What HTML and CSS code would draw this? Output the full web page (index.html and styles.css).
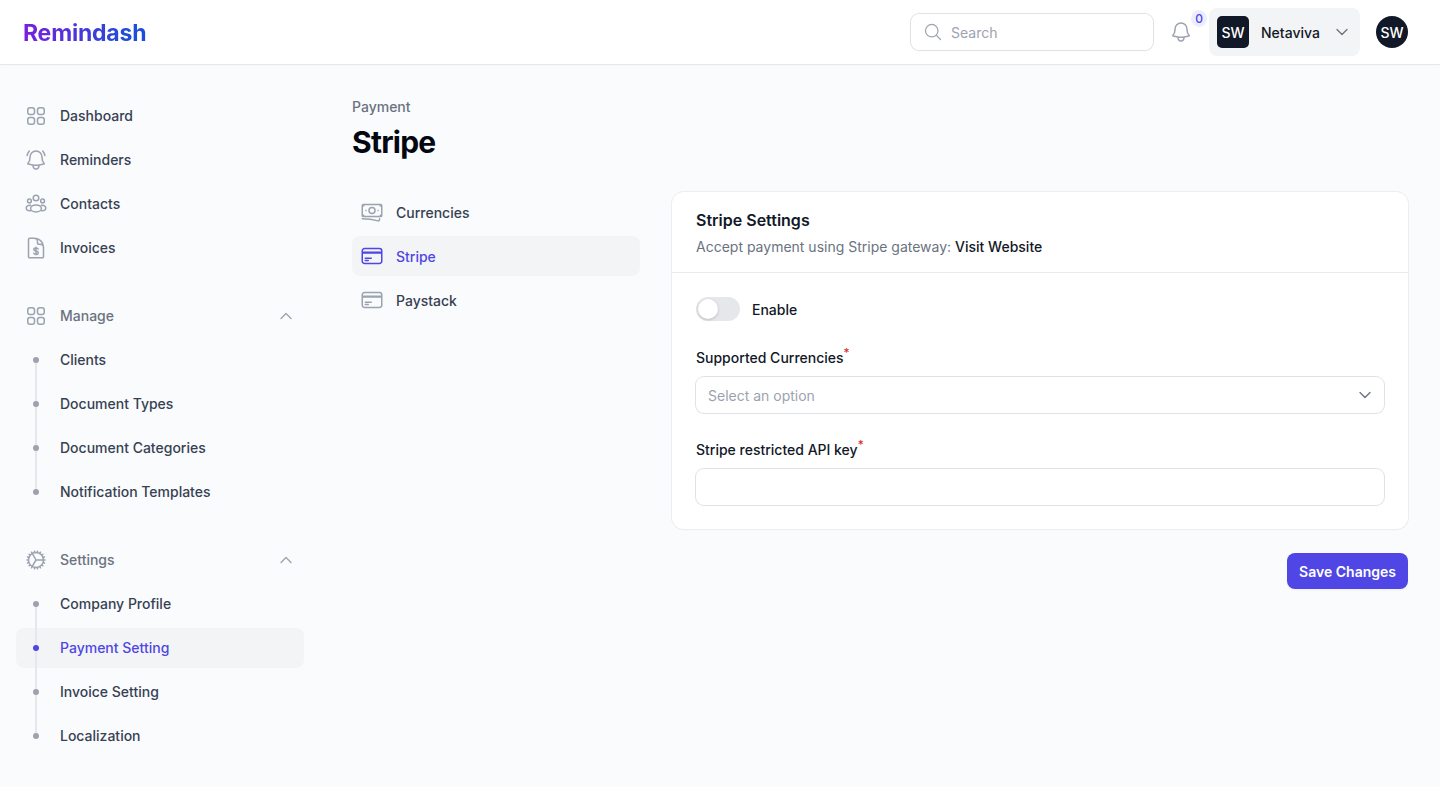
FILE: index.html
```html
<!DOCTYPE html>
<html lang="en">
<head>
    <meta charset="UTF-8">
    <meta name="viewport" content="width=device-width, initial-scale=1.0">
    <title>Stripe - Remindash</title>
    <link rel="stylesheet" href="styles.css">
</head>
<body>

<svg class="icon-defs" aria-hidden="true">
    <symbol id="i-grid" viewBox="0 0 24 24"><path d="M3.75 6A2.25 2.25 0 016 3.75h2.25A2.25 2.25 0 0110.5 6v2.25a2.25 2.25 0 01-2.25 2.25H6a2.25 2.25 0 01-2.25-2.25V6zM3.75 15.75A2.25 2.25 0 016 13.5h2.25a2.25 2.25 0 012.25 2.25V18a2.25 2.25 0 01-2.25 2.25H6A2.25 2.25 0 013.75 18v-2.25zM13.5 6a2.25 2.25 0 012.25-2.25H18A2.25 2.25 0 0120.25 6v2.25A2.25 2.25 0 0118 10.5h-2.25a2.25 2.25 0 01-2.25-2.25V6zM13.5 15.75a2.25 2.25 0 012.25-2.25H18a2.25 2.25 0 012.25 2.25V18A2.25 2.25 0 0118 20.25h-2.25A2.25 2.25 0 0113.5 18v-2.25z"/></symbol>
    <symbol id="i-bell-alert" viewBox="0 0 24 24"><path d="M14.857 17.082a23.848 23.848 0 005.454-1.31A8.967 8.967 0 0118 9.75v-.7V9A6 6 0 006 9v.75a8.967 8.967 0 01-2.312 6.022c1.733.64 3.56 1.085 5.455 1.31m5.714 0a24.255 24.255 0 01-5.714 0m5.714 0a3 3 0 11-5.714 0M3.124 7.5A8.969 8.969 0 015.292 3m13.416 0a8.969 8.969 0 012.168 4.5"/></symbol>
    <symbol id="i-bell" viewBox="0 0 24 24"><path d="M14.857 17.082a23.848 23.848 0 005.454-1.31A8.967 8.967 0 0118 9.75v-.7V9A6 6 0 006 9v.75a8.967 8.967 0 01-2.312 6.022c1.733.64 3.56 1.085 5.455 1.31m5.714 0a24.255 24.255 0 01-5.714 0m5.714 0a3 3 0 11-5.714 0"/></symbol>
    <symbol id="i-people" viewBox="0 0 24 24"><circle cx="12" cy="6" r="2.8"/><circle cx="5.4" cy="9" r="1.9"/><circle cx="18.6" cy="9" r="1.9"/><ellipse cx="12" cy="16.4" rx="5.4" ry="3.5"/><path d="M6.6 13.2C4 13.2 2.2 14.4 2.2 16s1.8 2.8 4.4 2.8M17.4 13.2c2.6 0 4.4 1.2 4.4 2.8s-1.8 2.8-4.4 2.8"/></symbol>
    <symbol id="i-invoice" viewBox="0 0 24 24"><path d="M10.5 2.25H5.625c-.621 0-1.125.504-1.125 1.125v17.25c0 .621.504 1.125 1.125 1.125h12.75c.621 0 1.125-.504 1.125-1.125V11.25a9 9 0 00-9-9zM19.5 14.25v-2.625a3.375 3.375 0 00-3.375-3.375h-1.5A1.125 1.125 0 0113.5 7.125v-1.5a3.375 3.375 0 00-3.375-3.375H8.25"/><path d="M12 11.2v7.6M14.2 13c-.3-.7-1.1-1.1-2.2-1.1s-2.2.5-2.2 1.6 1.1 1.4 2.2 1.6 2.2.6 2.2 1.6-1.1 1.6-2.2 1.6-1.9-.4-2.2-1.1"/></symbol>
    <symbol id="i-cog" viewBox="0 0 24 24"><path d="M4.5 12a7.5 7.5 0 0015 0m-15 0a7.5 7.5 0 1115 0m-15 0H3m16.5 0H21m-1.5 0H12m-8.457 3.077l1.41-.513m14.095-5.13l1.41-.513M5.106 17.785l1.15-.964m11.49-9.642l1.149-.964M7.501 19.795l.75-1.3m7.5-12.99l.75-1.3m-6.063 16.658l.26-1.477m2.605-14.772l.26-1.477m0 17.726l-.26-1.477M10.698 4.614l-.26-1.477M16.5 19.794l-.75-1.299M7.5 4.205L12 12m6.894 5.785l-1.149-.964M6.256 7.178l-1.15-.964m15.352 8.864l-1.41-.513M4.954 9.435l-1.41-.514M12.002 12l-3.75 6.495"/></symbol>
    <symbol id="i-chevron-up" viewBox="0 0 24 24"><path d="M4.5 15.75l7.5-7.5 7.5 7.5"/></symbol>
    <symbol id="i-chevron-down" viewBox="0 0 24 24"><path d="M19.5 8.25l-7.5 7.5-7.5-7.5"/></symbol>
    <symbol id="i-search" viewBox="0 0 24 24"><path d="M21 21l-5.197-5.197m0 0A7.5 7.5 0 105.196 5.196a7.5 7.5 0 0010.607 10.607z"/></symbol>
    <symbol id="i-banknotes" viewBox="0 0 24 24"><path d="M2.25 18.75a60.07 60.07 0 0115.797 2.101c.727.198 1.453-.342 1.453-1.096V18.75M3.75 4.5v.75A.75.75 0 013 6h-.75m0 0v-.375c0-.621.504-1.125 1.125-1.125H20.25M2.25 6v9m18-10.5v.75c0 .414.336.75.75.75h.75m-1.5-1.5h.375c.621 0 1.125.504 1.125 1.125v9.75c0 .621-.504 1.125-1.125 1.125h-.375m1.5-1.5H21a.75.75 0 00-.75.75v.75m0 0H3.75m0 0h-.375a1.125 1.125 0 01-1.125-1.125V15m1.5 1.5v-.75A.75.75 0 003 15h-.75M15 10.5a3 3 0 11-6 0 3 3 0 016 0zm3 0h.008v.008H18V10.5zm-12 0h.008v.008H6V10.5z"/></symbol>
    <symbol id="i-card" viewBox="0 0 24 24"><path d="M2.25 8.25h19.5M2.25 9h19.5m-16.5 5.25h6m-6 2.25h3m-3.75 3h15a2.25 2.25 0 002.25-2.25V6.75A2.25 2.25 0 0019.5 4.5h-15a2.25 2.25 0 00-2.25 2.25v10.5A2.25 2.25 0 004.5 19.5z"/></symbol>
</svg>

<header class="topbar">
    <a class="logo" href="#">Remindash</a>
    <div class="topbar-right">
        <label class="search">
            <svg class="icon icon-search"><use href="#i-search"/></svg>
            <input type="text" placeholder="Search">
        </label>
        <button class="bell" type="button">
            <svg class="icon"><use href="#i-bell"/></svg>
            <span class="bell-badge">0</span>
        </button>
        <button class="tenant" type="button">
            <span class="tenant-logo">SW</span>
            <span class="tenant-name">Netaviva</span>
            <svg class="icon icon-sm icon-dark"><use href="#i-chevron-down"/></svg>
        </button>
        <span class="avatar">SW</span>
    </div>
</header>

<div class="layout">
    <!-- Sidebar -->
    <nav class="sidebar">
        <div class="nav-group">
            <a class="nav-item" href="#"><svg class="icon"><use href="#i-grid"/></svg>Dashboard</a>
            <a class="nav-item" href="#"><svg class="icon"><use href="#i-bell-alert"/></svg>Reminders</a>
            <a class="nav-item" href="#"><svg class="icon"><use href="#i-people"/></svg>Contacts</a>
            <a class="nav-item" href="#"><svg class="icon"><use href="#i-invoice"/></svg>Invoices</a>
        </div>

        <div class="nav-group">
            <div class="nav-item nav-heading">
                <svg class="icon"><use href="#i-grid"/></svg>Manage
                <svg class="icon icon-sm nav-toggle"><use href="#i-chevron-up"/></svg>
            </div>
            <div class="nav-sub">
                <a class="nav-item" href="#"><span class="nav-dot"></span>Clients</a>
                <a class="nav-item" href="#"><span class="nav-dot"></span>Document Types</a>
                <a class="nav-item" href="#"><span class="nav-dot"></span>Document Categories</a>
                <a class="nav-item" href="#"><span class="nav-dot"></span>Notification Templates</a>
            </div>
        </div>

        <div class="nav-group">
            <div class="nav-item nav-heading">
                <svg class="icon"><use href="#i-cog"/></svg>Settings
                <svg class="icon icon-sm nav-toggle"><use href="#i-chevron-up"/></svg>
            </div>
            <div class="nav-sub">
                <a class="nav-item" href="#"><span class="nav-dot"></span>Company Profile</a>
                <a class="nav-item active" href="#"><span class="nav-dot"></span>Payment Setting</a>
                <a class="nav-item" href="#"><span class="nav-dot"></span>Invoice Setting</a>
                <a class="nav-item" href="#"><span class="nav-dot"></span>Localization</a>
            </div>
        </div>
    </nav>

    <main class="page">
        <p class="breadcrumb">Payment</p>
        <h1 class="page-title">Stripe</h1>

        <div class="page-body">
            <div class="tabs">
                <a class="nav-item" href="#"><svg class="icon"><use href="#i-banknotes"/></svg>Currencies</a>
                <a class="nav-item active" href="#"><svg class="icon"><use href="#i-card"/></svg>Stripe</a>
                <a class="nav-item" href="#"><svg class="icon"><use href="#i-card"/></svg>Paystack</a>
            </div>

            <form class="settings">
                <section class="card">
                    <div class="card-header">
                        <h2 class="card-title">Stripe Settings</h2>
                        <p class="card-desc">Accept payment using Stripe gateway: <a href="#">Visit Website</a></p>
                    </div>
                    <div class="card-body">
                        <div class="toggle-row">
                            <span class="toggle"><span class="toggle-knob"></span></span>
                            <span class="field-label">Enable</span>
                        </div>
                        <div class="field">
                            <label class="field-label">Supported Currencies<sup>*</sup></label>
                            <div class="control select">
                                <span class="select-text">Select an option</span>
                                <svg class="icon icon-sm icon-dark"><use href="#i-chevron-down"/></svg>
                            </div>
                        </div>
                        <div class="field">
                            <label class="field-label">Stripe restricted API key<sup>*</sup></label>
                            <input class="control" type="text">
                        </div>
                    </div>
                </section>
                <div class="actions">
                    <button class="btn-primary" type="button">Save Changes</button>
                </div>
            </form>
        </div>
    </main>
</div>

</body>
</html>
```

FILE: styles.css
```css
* { box-sizing: border-box; }
html, body { height: 100%; }
body {
    margin: 0;
    font-family: Inter, "Liberation Sans", sans-serif;
    font-size: 14px;
    line-height: 20px;
    background-color: #f9fbfd;
    color: #111827;
    overflow: hidden;
}
a { color: inherit; text-decoration: none; }
button { font: inherit; border: none; padding: 0; background: none; color: inherit; }
p, h1, h2 { margin: 0; }

.icon-defs { display: none; }
.icon {
    width: 24px;
    height: 24px;
    flex-shrink: 0;
    fill: none;
    stroke: #9ca3af;
    stroke-width: 1.5;
    stroke-linecap: round;
    stroke-linejoin: round;
}
/* 16px chevron in a 20px slot */
.icon-sm {
    width: 16px;
    height: 16px;
    margin: 0 2px;
    stroke-width: 2;
}
.icon-dark { stroke: #6b7280; }

/* Top bar */
.topbar {
    height: 64px;
    display: flex;
    align-items: center;
    justify-content: space-between;
    padding: 0 32px 0 23px;
    background-color: #fff;
    box-shadow: 0 1px 0 #e5e7eb, 0 2px 2px rgba(0,0,0,0.02);
    position: relative;
}
.logo {
    padding-top: 2px;
    font-size: 23px;
    line-height: 32px;
    font-weight: 700;
    letter-spacing: -0.2px;
    background: linear-gradient(100deg, #7c1de0 0%, #1d4ed8 85%);
    -webkit-background-clip: text;
    background-clip: text;
    color: transparent;
}
.topbar-right {
    display: flex;
    align-items: center;
    gap: 16px;
}
.search {
    width: 242px;
    height: 36px;
    display: flex;
    align-items: center;
    gap: 8px;
    padding: 0 12px;
    border-radius: 8px;
    background-color: #fff;
    box-shadow: 0 0 0 1px #e0e2e7, 0 1px 2px rgba(0,0,0,0.03);
}
.icon-search { width: 20px; height: 20px; }
.search input {
    flex: 1;
    min-width: 0;
    border: none;
    outline: none;
    padding: 2px 0 0;
    font: inherit;
    background: transparent;
}
.search input::placeholder { color: #9ca3af; }
.bell {
    position: relative;
    display: flex;
    width: 24px;
    height: 24px;
}
.bell-badge {
    position: absolute;
    top: -10px;
    left: 22px;
    width: 16px;
    height: 17px;
    border-radius: 50%;
    background-color: #eceefe;
    color: #4f46e5;
    font-size: 12px;
    line-height: 17px;
    font-weight: 500;
    text-align: center;
}
.tenant {
    height: 48px;
    width: 151px;
    display: flex;
    align-items: center;
    padding: 0 8px;
    border-radius: 8px;
    background-color: #f3f4f6;
}
.tenant-logo {
    width: 32px;
    height: 32px;
    padding-top: 2px;
    display: flex;
    align-items: center;
    justify-content: center;
    border-radius: 5px;
    background-color: #111827;
    color: #fff;
    font-weight: 500;
}
.tenant-name {
    flex: 1;
    margin-left: 12px;
    padding-top: 2px;
    text-align: left;
    font-weight: 500;
}
.avatar {
    width: 32px;
    height: 32px;
    padding-top: 2px;
    display: flex;
    align-items: center;
    justify-content: center;
    border-radius: 50%;
    background-color: #111827;
    color: #fff;
    font-weight: 500;
}

/* Page layout */
.layout { display: flex; }

/* Sidebar */
.sidebar {
    width: 320px;
    flex-shrink: 0;
    padding: 32px 16px 0;
    display: flex;
    flex-direction: column;
    gap: 28px;
}
.nav-group,
.nav-sub,
.tabs {
    display: flex;
    flex-direction: column;
    gap: 4px;
}
.nav-item {
    height: 40px;
    display: flex;
    align-items: center;
    gap: 12px;
    padding: 0 8px;
    border-radius: 8px;
    font-weight: 500;
    color: #374151;
}
.nav-item.active {
    background-color: #f3f4f6;
    color: #4f46e5;
}
.nav-item.active .icon { stroke: #4f46e5; }
.nav-heading { color: #6b7280; }
.nav-toggle { margin-left: auto; }
.nav-sub { position: relative; }
.nav-sub::before {
    content: '';
    position: absolute;
    left: 19px;
    top: 20px;
    bottom: 20px;
    width: 2px;
    background-color: #e5e7eb;
}
.nav-dot {
    position: relative;
    width: 24px;
    height: 6px;
    flex-shrink: 0;
}
.nav-dot::before {
    content: '';
    position: absolute;
    left: 9px;
    top: 0;
    width: 6px;
    height: 6px;
    border-radius: 50%;
    background-color: #9ca3af;
}
.nav-item.active .nav-dot::before { background-color: #4f46e5; }

/* Main content */
.page {
    flex: 1;
    min-width: 0;
    padding: 33px 32px 0;
}
.breadcrumb {
    color: #6b7280;
    font-weight: 500;
}
.page-title {
    margin-top: 7px;
    font-size: 30px;
    line-height: 36px;
    font-weight: 700;
    letter-spacing: -0.025em;
    color: #030712;
}
.page-body {
    margin-top: 32px;
    display: flex;
    align-items: flex-start;
    gap: 32px;
}
.tabs {
    width: 288px;
    flex-shrink: 0;
}
.tabs .nav-item { padding-top: 2px; } /* text sits 1px under centre here */
.tabs .icon { margin-top: -2px; }
.settings { flex: 1; min-width: 0; }

.card {
    border-radius: 12px;
    background-color: #fff;
    box-shadow: 0 0 0 1px #eceef1, 0 1px 2px rgba(0,0,0,0.04);
}
.card-header {
    padding: 16px 24px 15px;
    border-bottom: 1px solid #e9eaed;
}
.card-title {
    font-size: 16px;
    line-height: 24px;
    font-weight: 600;
}
.card-desc {
    margin-top: 5px;
    color: #6b7280;
}
.card-desc a {
    color: #111827;
    font-weight: 500;
}
.card-body {
    padding: 24px;
    display: flex;
    flex-direction: column;
    gap: 27px;
}
.toggle-row {
    height: 24px;
    display: flex;
    align-items: flex-start;
    gap: 12px;
}
.toggle-row .field-label { padding-top: 3px; }
.toggle {
    width: 44px;
    height: 24px;
    padding: 2px;
    border-radius: 12px;
    background-color: #e5e7eb;
}
.toggle-knob {
    display: block;
    width: 20px;
    height: 20px;
    border-radius: 50%;
    background-color: #fff;
    box-shadow: 0 1px 3px rgba(0,0,0,0.2);
}
.field-label {
    font-weight: 500;
    color: #111827;
}
.field-label sup {
    line-height: 0;
    color: #dc2626;
}
.field {
    display: flex;
    flex-direction: column;
    gap: 9px;
}
.control {
    height: 36px;
    width: 100%;
    border: none;
    outline: none;
    border-radius: 8px;
    background-color: #fff;
    box-shadow: 0 0 0 1px #e0e2e7, 0 1px 2px rgba(0,0,0,0.03);
    font: inherit;
    padding: 0 12px;
}
.select {
    display: flex;
    align-items: center;
    justify-content: space-between;
    padding-right: 9px;
}
.select-text {
    padding-top: 2px;
    color: #9ca3af;
}

.actions {
    margin-top: 24px;
    display: flex;
    justify-content: flex-end;
}
.btn-primary {
    height: 36px;
    padding: 2px 12px 0;
    border-radius: 8px;
    background-color: #4f46e5;
    color: #fff;
    font-weight: 600;
    box-shadow: 0 1px 2px rgba(0,0,0,0.05);
}
```
